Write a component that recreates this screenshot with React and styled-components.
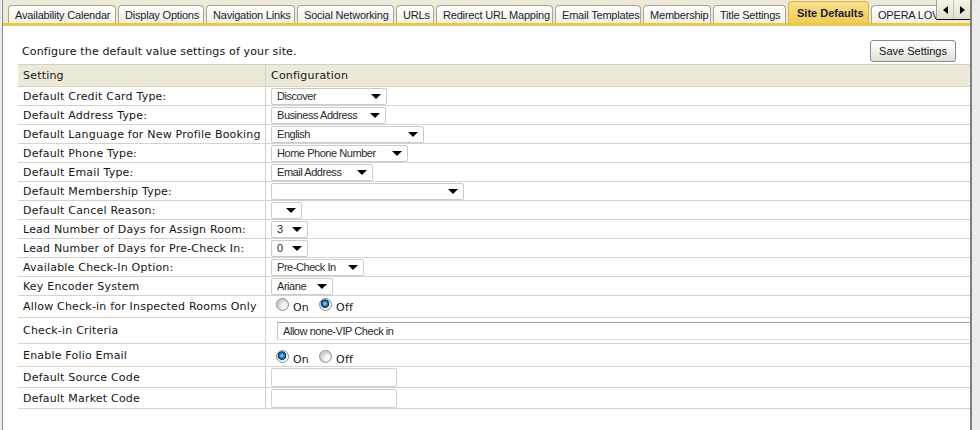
import React from 'react';
import styled, { createGlobalStyle } from 'styled-components';

const GlobalStyle = createGlobalStyle`
	html, body {
		margin: 0;
		padding: 0;
		background: #ececec;
	}
	body {
		font-family: "DejaVu Sans", Verdana, sans-serif;
	}
`;

const LINE = '#d9d3c7';

const Page = styled.div`
	display: flex;
	width: 980px;
	height: 430px;
	overflow: hidden;
	background: #ececec;
`;

const Shell = styled.div`
	margin-left: 2px;
	width: 967px;
	flex: 0 0 967px;
	border-left: 1px solid #8a8a8a;
	border-right: 2px solid #7f7f7f;
	background: #fff;
	display: flex;
	flex-direction: column;
	overflow: hidden;
`;

const TabStrip = styled.div`
	display: flex;
	height: 23px;
	background: #ece9d8;
	border-bottom: 3px solid #e6c84f;
	padding-left: 5px;
`;

const TabTrack = styled.div`
	flex: 1;
	display: flex;
	align-items: flex-end;
	gap: 2px;
	overflow: hidden;
`;

const Tab = styled.div`
	flex: 0 0 ${p => p.$w}px;
	box-sizing: border-box;
	height: ${p => (p.$active ? 22 : 18)}px;
	border: 1px solid ${p => (p.$active ? '#d6b64a' : '#a9a597')};
	border-bottom: none;
	border-radius: 4px 4px 0 0;
	background: ${p => (p.$active
		? 'linear-gradient(#f8e08c, #eecc56)'
		: 'linear-gradient(#ffffff, #f4f0dc)')};
	font: ${p => (p.$active ? 'bold' : 'normal')} 11px "Liberation Sans", Arial, sans-serif;
	letter-spacing: ${p => (p.$active ? 0 : -0.2)}px;
	color: #1b1b38;
	display: flex;
	align-items: center;
	padding-left: ${p => (p.$active ? 8 : 6)}px;
	white-space: nowrap;
	overflow: hidden;
`;

const ScrollBox = styled.div`
	flex: 0 0 34px;
	height: 20px;
	box-sizing: border-box;
	align-self: flex-start;
	display: flex;
	border-left: 1px solid #9d9d9d;
	border-bottom: 1px solid #111;
	background: linear-gradient(#f6f4ea, #e2ddcb);
`;

const ScrollButton = styled.div`
	flex: 1;
	display: flex;
	align-items: center;
	justify-content: center;
	& + & {
		border-left: 1px solid #c9c4b2;
	}
`;

const Body = styled.div`
	padding: 14px 14px 0 15px;
`;

const TopRow = styled.div`
	display: flex;
	justify-content: space-between;
	align-items: center;
	height: 22px;
	margin-bottom: 2px;
`;

const Intro = styled.p`
	margin: 0;
	padding-left: 4px;
	font-size: 11px;
	color: #111;
	letter-spacing: 0.15px;
`;

const SaveButton = styled.button`
	width: 86px;
	height: 22px;
	padding: 0;
	border: 1px solid #8c8c8c;
	border-radius: 3px;
	background: linear-gradient(#ffffff, #f0f0ec 55%, #dcdcd5);
	font: 11px "Liberation Sans", Arial, sans-serif;
	color: #111;
`;

const Table = styled.div`
	width: 960px;
	border-top: 1px solid #d4d0c8;
`;

const Row = styled.div`
	display: grid;
	grid-template-columns: 248px 1fr;
	height: ${p => p.$h || 19}px;
	box-sizing: border-box;
	border-bottom: 1px solid ${LINE};
	background: ${p => (p.$head ? '#ece9d8' : '#fff')};
`;

const Label = styled.div`
	border-right: 1px solid ${LINE};
	padding-left: 5px;
	display: flex;
	align-items: center;
	font-size: 11px;
	letter-spacing: 0.2px;
	color: #151515;
	white-space: nowrap;
`;

const Config = styled.div`
	padding-left: 5px;
	display: flex;
	align-items: ${p => (p.$top != null ? 'flex-start' : 'center')};
	padding-top: ${p => p.$top || 0}px;
	font-size: 11px;
	letter-spacing: 0.2px;
	color: #151515;
	white-space: nowrap;
`;

const SelectBox = styled.div`
	width: ${p => p.$w}px;
	height: 17px;
	box-sizing: border-box;
	border: 1px solid #cbcbcb;
	border-radius: 2px;
	display: flex;
	align-items: center;
	justify-content: space-between;
	padding: 0 5px 0 5px;
	font: 11px "Liberation Sans", Arial, sans-serif;
	letter-spacing: -0.45px;
	color: #2a2a2a;
	background: #fff;
`;

const Caret = styled.svg`
	flex: 0 0 auto;
	margin-left: auto;
`;

const RadioGroup = styled.div`
	display: flex;
	align-items: flex-end;
	margin-left: 5px;
`;

const RadioOption = styled.label`
	display: flex;
	align-items: flex-end;
	gap: 4px;
	margin-right: 10px;
	line-height: 12px;
`;

const RadioDot = styled.span`
	width: 13px;
	height: 13px;
	box-sizing: border-box;
	border-radius: 50%;
	border: 1px solid #8d8d8d;
	margin-bottom: 3px;
	background: ${p => (p.$checked
		? 'radial-gradient(circle at 45% 42%, #bdf0ff 0, #3c9ad6 1.5px, #0d4a80 3.5px, #0a3562 4px, #e6e6e6 4.6px, #ffffff 6px)'
		: 'radial-gradient(circle at 65% 65%, #ffffff 0, #f2f2f2 3px, #cfcfcf 6px)')};
`;

const CriteriaBox = styled.div`
	width: 720px;
	height: 18px;
	box-sizing: border-box;
	margin-left: 6px;
	border-top: 1px solid #9e9e9e;
	border-left: 1px solid #c8c8c8;
	border-bottom: 1px solid #dfe6ec;
	padding-left: 5px;
	display: flex;
	align-items: center;
	font: 11px "Liberation Sans", Arial, sans-serif;
	letter-spacing: -0.45px;
	color: #2a2a2a;
`;

const TextBox = styled.div`
	width: 126px;
	height: 19px;
	box-sizing: border-box;
	border: 1px solid #d0d0d0;
	border-radius: 2px;
	background: #fff;
`;

function Select({ w, value }) {
	return (
		<SelectBox $w={w}>
			<span>{value}</span>
			<Caret width="10" height="5" viewBox="0 0 10 5">
				<polygon points="0,0 10,0 5,5" fill="#000" />
			</Caret>
		</SelectBox>
	);
}

function Radios({ on }) {
	return (
		<RadioGroup>
			<RadioOption>
				<RadioDot $checked={on} />
				<span>On</span>
			</RadioOption>
			<RadioOption>
				<RadioDot $checked={!on} />
				<span>Off</span>
			</RadioOption>
		</RadioGroup>
	);
}

const tabs = [
	['Availability Calendar', 108],
	['Display Options', 86],
	['Navigation Links', 89],
	['Social Networking', 97],
	['URLs', 38],
	['Redirect URL Mapping', 117],
	['Email Templates', 86],
	['Membership', 68],
	['Title Settings', 73],
	['Site Defaults', 81, true],
	['OPERA LOV', 110],
];

const selectRows = [
	['Default Credit Card Type:', 'Discover', 116],
	['Default Address Type:', 'Business Address', 115],
	['Default Language for New Profile Booking', 'English', 153],
	['Default Phone Type:', 'Home Phone Number', 137],
	['Default Email Type:', 'Email Address', 102],
	['Default Membership Type:', '', 193],
	['Default Cancel Reason:', '', 31],
	['Lead Number of Days for Assign Room:', '3', 37],
	['Lead Number of Days for Pre-Check In:', '0', 37],
	['Available Check-In Option:', 'Pre-Check In', 93],
	['Key Encoder System', 'Ariane', 62],
];

export default function App() {
	return (
		<>
			<GlobalStyle />
			<Page>
				<Shell>
					<TabStrip>
						<TabTrack>
							{tabs.map(([name, w, active]) => (
								<Tab key={name} $w={w} $active={active}>{name}</Tab>
							))}
						</TabTrack>
						<ScrollBox>
							<ScrollButton>
								<svg width="5" height="8" viewBox="0 0 5 8"><polygon points="5,0 5,8 0,4" fill="#000" /></svg>
							</ScrollButton>
							<ScrollButton>
								<svg width="5" height="8" viewBox="0 0 5 8"><polygon points="0,0 0,8 5,4" fill="#000" /></svg>
							</ScrollButton>
						</ScrollBox>
					</TabStrip>

					<Body>
						<TopRow>
							<Intro>Configure the default value settings of your site.</Intro>
							<SaveButton>Save Settings</SaveButton>
						</TopRow>

						<Table>
							<Row $head $h={22}>
								<Label>Setting</Label>
								<Config>Configuration</Config>
							</Row>
							{selectRows.map(([label, value, w]) => (
								<Row key={label}>
									<Label>{label}</Label>
									<Config><Select w={w} value={value} /></Config>
								</Row>
							))}
							<Row $h={22}>
								<Label>Allow Check-in for Inspected Rooms Only</Label>
								<Config $top={2}><Radios on={false} /></Config>
							</Row>
							<Row $h={26}>
								<Label>Check-in Criteria</Label>
								<Config><CriteriaBox>Allow none-VIP Check in</CriteriaBox></Config>
							</Row>
							<Row $h={23}>
								<Label>Enable Folio Email</Label>
								<Config $top={6}><Radios on /></Config>
							</Row>
							<Row $h={21}>
								<Label>Default Source Code</Label>
								<Config><TextBox /></Config>
							</Row>
							<Row $h={21}>
								<Label>Default Market Code</Label>
								<Config><TextBox /></Config>
							</Row>
						</Table>
					</Body>
				</Shell>
			</Page>
		</>
	);
}
